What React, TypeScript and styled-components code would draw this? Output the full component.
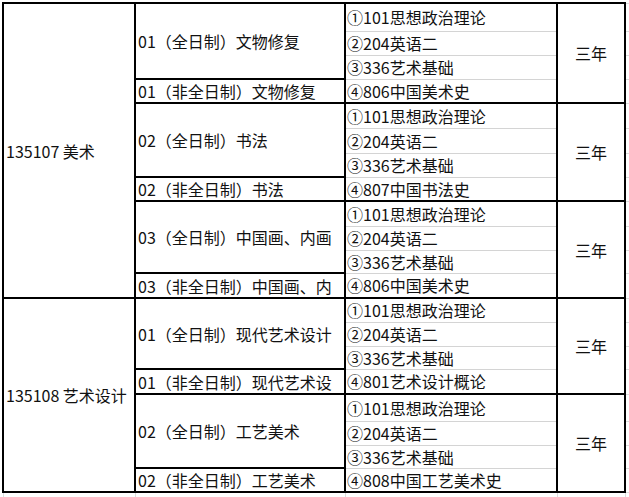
import styled, { createGlobalStyle } from 'styled-components';

const GlobalStyle = createGlobalStyle`
  html, body {
    margin: 0;
    padding: 0;
    background: #ffffff;
  }
  body {
    font-family: "Noto Sans CJK SC", "Noto Sans", sans-serif;
    color: #111111;
  }
`;

const Page = styled.div`
  padding: 2px 0 0 2px;
  width: 629px;
  height: 497px;
  overflow: hidden;
  box-sizing: border-box;
`;

const Sheet = styled.table`
  border-collapse: collapse;
  table-layout: fixed;
  width: 634px;
  font-size: 16px;
  line-height: 20px;
`;

const Column = styled.col<{ $w: number }>`
  width: ${({ $w }) => $w}px;
`;

const Row = styled.tr<{ $h: number }>`
  height: ${({ $h }) => $h}px;
`;

const Cell = styled.td<{ $align?: 'left' | 'center' }>`
  border: 2px solid #000000;
  padding: 0 2px;
  text-align: ${({ $align }) => $align ?? 'left'};
  vertical-align: middle;
  white-space: nowrap;
  overflow: hidden;
`;

const ExamCell = styled.td<{ $first: boolean; $last: boolean }>`
  border-left: 2px solid #000000;
  border-right: 2px solid #000000;
  border-top: ${({ $first }) => ($first ? '2px solid #000000' : '1px solid #d4d4d4')};
  border-bottom: ${({ $last }) => ($last ? '2px solid #000000' : '1px solid #d4d4d4')};
  padding: 0 1px;
  vertical-align: middle;
  white-space: nowrap;
  overflow: hidden;
`;

const Gutter = styled.td`
  border: 1px solid #dcdcdc;
  padding: 0;
`;

type Block = {
  major?: { name: string; span: number };
  fullTime: string;
  partTime: string;
  exams: string[];
  heights: number[];
};

const columns = [132, 210, 212, 68, 12];

const blocks: Block[] = [
  {
    major: { name: '135107 美术', span: 12 },
    fullTime: '01（全日制）文物修复',
    partTime: '01（非全日制）文物修复',
    exams: ['①101思想政治理论', '②204英语二', '③336艺术基础', '④806中国美术史'],
    heights: [28, 24, 24, 24],
  },
  {
    fullTime: '02（全日制）书法',
    partTime: '02（非全日制）书法',
    exams: ['①101思想政治理论', '②204英语二', '③336艺术基础', '④807中国书法史'],
    heights: [25, 25, 24, 24],
  },
  {
    fullTime: '03（全日制）中国画、内画',
    partTime: '03（非全日制）中国画、内',
    exams: ['①101思想政治理论', '②204英语二', '③336艺术基础', '④806中国美术史'],
    heights: [25, 24, 23, 25],
  },
  {
    major: { name: '135108 艺术设计', span: 8 },
    fullTime: '01（全日制）现代艺术设计',
    partTime: '01（非全日制）现代艺术设',
    exams: ['①101思想政治理论', '②204英语二', '③336艺术基础', '④801艺术设计概论'],
    heights: [24, 24, 23, 25],
  },
  {
    fullTime: '02（全日制）工艺美术',
    partTime: '02（非全日制）工艺美术',
    exams: ['①101思想政治理论', '②204英语二', '③336艺术基础', '④808中国工艺美术史'],
    heights: [27, 24, 23, 24],
  },
];

export default function App() {
  return (
    <>
      <GlobalStyle />
      <Page>
        <Sheet>
          <colgroup>
            {columns.map((w, i) => (
              <Column key={i} $w={w} />
            ))}
          </colgroup>
          <tbody>
            {blocks.map((block, b) =>
              block.exams.map((exam, i) => (
                <Row key={`${b}-${i}`} $h={block.heights[i]}>
                  {i === 0 && block.major && (
                    <Cell rowSpan={block.major.span}>{block.major.name}</Cell>
                  )}
                  {i === 0 && <Cell rowSpan={3}>{block.fullTime}</Cell>}
                  {i === 3 && <Cell>{block.partTime}</Cell>}
                  <ExamCell $first={i === 0} $last={i === 3}>
                    {exam}
                  </ExamCell>
                  {i === 0 && (
                    <Cell rowSpan={4} $align="center">
                      三年
                    </Cell>
                  )}
                  <Gutter />
                </Row>
              ))
            )}
            <Row $h={12}>
              {columns.map((_, i) => (
                <Gutter key={i} />
              ))}
            </Row>
          </tbody>
        </Sheet>
      </Page>
    </>
  );
}
